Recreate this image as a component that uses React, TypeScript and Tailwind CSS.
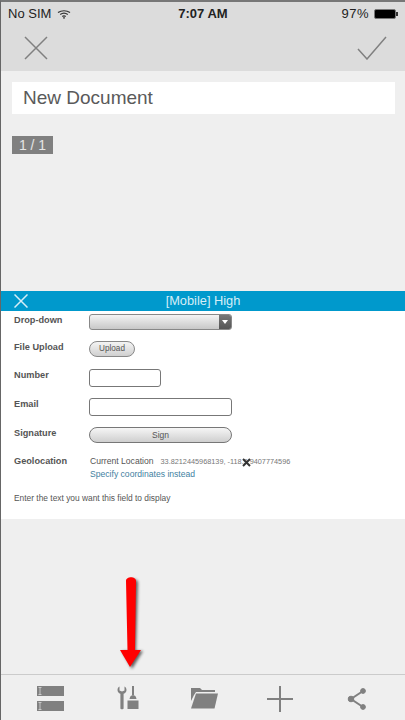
const font = { fontFamily: '"Liberation Sans", Arial, sans-serif' };

function Row({ label, h, children }: { label: string; h: string; children: React.ReactNode }) {
  return (
    <div className={`flex items-start ${h}`}>
      <div className="w-[75px] text-[9.2px] leading-[12px] font-bold text-[#555]">{label}</div>
      {children}
    </div>
  );
}

export default function App() {
  return (
    <div style={font} className="relative w-[405px] h-[720px] bg-[#efefef] border-l border-l-[#666] border-t-2 border-t-[#777] flex flex-col overflow-hidden box-border">
      <div className="bg-[#dcdcdc] h-[69px] flex flex-col shrink-0">
        <div className="h-[24px] flex items-center justify-between pl-[7px] pr-[7px] text-[13px] text-[#222]">
          <div className="flex items-center gap-[6px] w-[120px]">
            <span>No SIM</span>
            <svg width="14" height="9" viewBox="0 0 14 9" fill="none" stroke="#333" strokeWidth="1.2">
              <path d="M1 2.6C4.5 .1 9.5 .1 13 2.6" />
              <path d="M3.2 4.6C5.4 3 8.6 3 10.8 4.6" />
              <path d="M5.3 6.4C6.3 5.7 7.7 5.7 8.7 6.4" />
              <circle cx="7" cy="7.9" r="0.8" fill="#222" stroke="none" />
            </svg>
          </div>
          <span className="font-bold">7:07 AM</span>
          <div className="flex items-center justify-end gap-[5px] w-[120px]">
            <span className="tracking-[0.5px]">97%</span>
            <div className="flex items-center">
              <div className="w-[22px] h-[10px] bg-black rounded-[2px] border border-[#777]" />
              <div className="w-[2px] h-[4px] bg-[#333]" />
            </div>
          </div>
        </div>
        <div className="flex-1 flex items-center justify-between pl-[23px] pr-[18px] pb-[2px]">
          <svg width="24" height="24" viewBox="0 0 24 24" stroke="#808080" strokeWidth="1.5" fill="none">
            <path d="M1 1L23 23M23 1L1 23" />
          </svg>
          <svg width="30" height="24" viewBox="0 0 30 24" stroke="#808080" strokeWidth="1.5" fill="none">
            <path d="M1 13L10 23L29 1" />
          </svg>
        </div>
      </div>

      <div className="ml-[11px] mr-[10px] mt-[11px] h-[32px] bg-white px-[11px] flex items-center text-[19px] text-[#5a5a5a]">
        New Document
      </div>
      <div className="ml-[11px] mt-[22px] w-[41px] h-[18px] bg-[#808080] text-white/80 text-[14px] flex items-center justify-center">
        1 / 1
      </div>

      <div className="mt-[137px] bg-[#0099cc] h-[20px] relative flex items-center justify-center text-[12.8px] text-[#d5eef7] shrink-0">
        <svg className="absolute left-[13px] top-[3px]" width="14" height="14" viewBox="0 0 14 14" stroke="#d5eef7" strokeWidth="1.5" fill="none">
          <path d="M.5 .5L13.5 13.5M13.5 .5L.5 13.5" />
        </svg>
        [Mobile] High
      </div>

      <div className="bg-white h-[208px] pl-[13px] flex flex-col shrink-0">
        <Row label="Drop-down" h="h-[30px] pt-[3px]">
          <div className="w-[143px] h-[16px] rounded-[3px] border border-[#888] bg-gradient-to-b from-[#f4f4f4] to-[#c8c8c8] flex justify-end overflow-hidden">
            <div className="w-[12px] bg-gradient-to-b from-[#777] to-[#555] flex items-center justify-center">
              <div className="w-0 h-0 border-l-[3px] border-r-[3px] border-t-[4px] border-l-transparent border-r-transparent border-t-white" />
            </div>
          </div>
        </Row>
        <Row label="File Upload" h="h-[28px]">
          <div className="w-[46px] h-[16px] rounded-full border border-[#888] bg-gradient-to-b from-[#f4f4f4] to-[#d0d0d0] text-[8.2px] text-[#555] flex items-center justify-center">Upload</div>
        </Row>
        <Row label="Number" h="h-[29px]">
          <div className="w-[72px] h-[18px] rounded-[3px] border border-[#777] bg-white" />
        </Row>
        <Row label="Email" h="h-[29px]">
          <div className="w-[143px] h-[18px] rounded-[3px] border border-[#777] bg-white" />
        </Row>
        <Row label="Signature" h="h-[28px]">
          <div className="w-[143px] h-[16px] rounded-full border border-[#777] bg-gradient-to-b from-[#f6f6f6] to-[#cfcfcf] text-[8.5px] text-[#555] flex items-center justify-center">Sign</div>
        </Row>
        <Row label="Geolocation" h="h-[37px]">
          <div className="text-[8.6px] leading-[13px] text-[#555] ml-[1px]">
            <div className="flex items-center relative whitespace-nowrap">
              <span>Current Location</span>
              <span className="ml-[7px] text-[7.3px] text-[#777]">33.8212445968139, -118.3 9407774596</span>
              <svg className="absolute left-[152px] top-[3px]" width="9" height="9" viewBox="0 0 9 9" stroke="#333" strokeWidth="2" fill="none">
                <path d="M1 1L8 8M8 1L1 8" />
              </svg>
            </div>
            <div className="text-[#3f7f9f]">Specify coordinates instead</div>
          </div>
        </Row>
        <div className="text-[8.4px] leading-[12px] text-[#555]">Enter the text you want this field to display</div>
      </div>

      <div className="flex-1" />

      <div className="h-[46px] border-t border-t-[#cbcbcb] flex items-center relative shrink-0">
        <svg className="absolute left-[36px] top-[11px]" width="27" height="26" viewBox="0 0 27 26">
          <rect x="0" y="0" width="27" height="10" fill="#808080" />
          <rect x="0" y="15" width="27" height="10" fill="#808080" />
          <path d="M1.5 1.5h3M3 1.5v7M1.5 8.5h3M1.5 16.5h3M3 16.5v7M1.5 23.5h3" stroke="#d8d8d8" strokeWidth="0.8" fill="none" />
        </svg>
        <svg className="absolute left-[116px] top-[11px]" width="23" height="24" viewBox="0 0 23 24" fill="#808080">
          <path d="M.5 4C.5 2.4 1.4 1 2.5 .5V4.6L5 5.6L7.5 4.6V.5C8.6 1 9.5 2.4 9.5 4C9.5 5.8 8.4 7.2 6.6 7.8V22.5C6.6 23.4 3.4 23.4 3.4 22.5V7.8C1.6 7.2 .5 5.8 .5 4Z" />
          <rect x="15" y="0" width="2" height="9" />
          <path d="M12.5 13C13 10 14 9.5 16 9C18 9.5 19 10 19.5 13Z" />
          <rect x="10.5" y="14.5" width="11" height="8.5" />
        </svg>
        <svg className="absolute left-[190px] top-[13px]" width="27" height="21" viewBox="0 0 27 21" fill="#808080">
          <path d="M0 0H9L11 2H24V4H5L3 7L0 13Z" />
          <path d="M0 20.5L5 5.5H27L23.5 20.5Z" />
        </svg>
        <svg className="absolute left-[266px] top-[11px]" width="26" height="26" viewBox="0 0 26 26" stroke="#808080" strokeWidth="2" fill="none">
          <path d="M13 0V26M0 13H26" />
        </svg>
        <svg className="absolute left-[345px] top-[12px]" width="21" height="24" viewBox="0 0 21 24" fill="#808080" stroke="#808080">
          <circle cx="17" cy="4" r="2.4" />
          <circle cx="5" cy="12" r="2.8" />
          <circle cx="17" cy="20" r="2.4" />
          <path d="M17 4L5 12L17 20" fill="none" strokeWidth="2" />
        </svg>
      </div>

      <svg className="absolute left-[117px] top-[574px]" width="30" height="96" viewBox="0 0 30 96">
        <path d="M9 6C9 1 18 1 18 6L16 74L23 74L12 92L2 74L10 74Z" fill="#000" opacity="0.6" transform="translate(2 1)" style={{ filter: "blur(1.5px)" }} />
        <path d="M8 5C8 0 18 0 18 5L17 74L23 74L12 91L2 74L9.5 74Z" fill="#ff0000" />
      </svg>
    </div>
  );
}
